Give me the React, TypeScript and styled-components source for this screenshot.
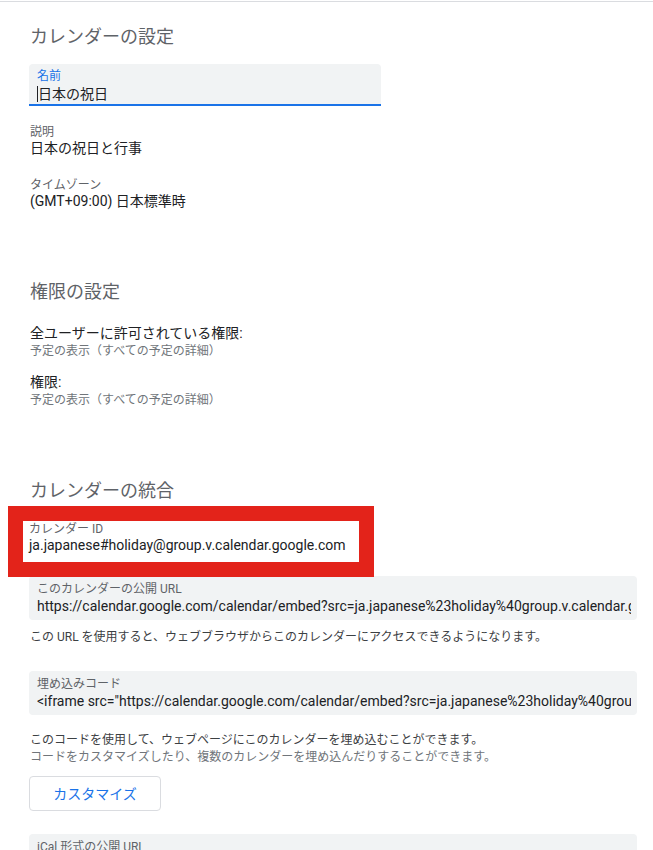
import React from "react";
import styled, { createGlobalStyle } from "styled-components";

const Global = createGlobalStyle`
  html, body { margin: 0; padding: 0; background: #fff; }
  body {
    font-family: Roboto, "Noto Sans CJK JP", "Noto Sans", sans-serif;
    color: #3c4043;
    -webkit-font-smoothing: antialiased;
  }
  * { box-sizing: border-box; }
`;

const TopRule = styled.div`
  height: 1px;
  margin-top: 1px;
  background: #dadce0;
`;

const Page = styled.main`
  padding: 0 16px 0 29px;
  overflow: hidden;
  height: 848px;
`;

const Section = styled.section<{ $gap: number }>`
  margin-top: ${(p) => p.$gap}px;
  display: flex;
  flex-direction: column;
`;

const Heading = styled.h2`
  margin: 0 0 0 1px;
  font-size: 18px;
  line-height: 24px;
  font-weight: 400;
  color: #5f6368;
`;

const EditField = styled.div`
  margin-top: 15px;
  width: 352px;
  height: 42px;
  padding: 4px 8px 0;
  background: #f1f3f4;
  border-radius: 4px 4px 0 0;
  border-bottom: 2px solid #1a73e8;
  display: flex;
  flex-direction: column;
`;

const EditLabel = styled.div`
  font-size: 12px;
  line-height: 16px;
  color: #1a73e8;
`;

const EditValue = styled.div`
  font-size: 14px;
  line-height: 20px;
  color: #202124;
  display: flex;
  align-items: center;
`;

const Caret = styled.span`
  width: 1px;
  height: 16px;
  background: #202124;
`;

const Info = styled.div<{ $gap: number }>`
  margin-top: ${(p) => p.$gap}px;
  padding-left: 1px;
  display: flex;
  flex-direction: column;
`;

const InfoLabel = styled.div`
  font-size: 12px;
  line-height: 14px;
  color: #5f6368;
`;

const InfoValue = styled.div`
  font-size: 14px;
  line-height: 18px;
  color: #202124;
`;

const PermTitle = styled.div`
  font-size: 14px;
  line-height: 20px;
  color: #202124;
`;

const PermSub = styled.div`
  font-size: 12px;
  line-height: 16px;
  color: #70757a;
`;

const IdField = styled.div`
  position: relative;
  margin-top: 17px;
  padding-top: 2px;
  display: flex;
  flex-direction: column;
`;

const IdLabel = styled.div`
  font-size: 12px;
  line-height: 14px;
  color: #5f6368;
`;

const IdValue = styled.div`
  font-size: 14px;
  line-height: 18px;
  color: #202124;
  white-space: nowrap;
`;

const Highlight = styled.div`
  position: absolute;
  left: -21px;
  top: -14px;
  width: 366px;
  height: 71px;
  border: 15px solid #e3231a;
  pointer-events: none;
`;

const CopyField = styled.div<{ $gap: number }>`
  margin-top: ${(p) => p.$gap}px;
  height: 44px;
  padding: 5px 6px 5px 8px;
  border-radius: 4px;
  background: #f1f3f4;
  display: flex;
  flex-direction: column;
  overflow: hidden;
`;

const CopyLabel = styled.div`
  font-size: 12px;
  line-height: 16px;
  color: #5f6368;
  white-space: nowrap;
`;

const CopyValue = styled.div`
  font-size: 14px;
  line-height: 18px;
  color: #202124;
  white-space: nowrap;
  overflow: hidden;
`;

const Help = styled.p<{ $muted?: boolean; $gap: number }>`
  margin: ${(p) => p.$gap}px 0 0 1px;
  font-size: 12px;
  line-height: 17px;
  color: ${(p) => (p.$muted ? "#70757a" : "#3c4043")};
`;

const Button = styled.button`
  margin-top: 10px;
  width: 132px;
  height: 35px;
  border: 1px solid #dadce0;
  border-radius: 4px;
  background: #fff;
  color: #1a73e8;
  font-family: inherit;
  font-size: 14px;
  line-height: 20px;
  padding: 0;
  cursor: pointer;
`;

export default function App() {
  return (
    <>
      <Global />
      <TopRule />
      <Page>
        <Section $gap={23}>
          <Heading>カレンダーの設定</Heading>
          <EditField>
            <EditLabel>名前</EditLabel>
            <EditValue>
              <Caret />
              日本の祝日
            </EditValue>
          </EditField>
          <Info $gap={19}>
            <InfoLabel>説明</InfoLabel>
            <InfoValue>日本の祝日と行事</InfoValue>
          </Info>
          <Info $gap={21}>
            <InfoLabel>タイムゾーン</InfoLabel>
            <InfoValue>(GMT+09:00) 日本標準時</InfoValue>
          </Info>
        </Section>

        <Section $gap={70}>
          <Heading>権限の設定</Heading>
          <Info $gap={19}>
            <PermTitle>全ユーザーに許可されている権限:</PermTitle>
            <PermSub>予定の表示（すべての予定の詳細）</PermSub>
          </Info>
          <Info $gap={13}>
            <PermTitle>権限:</PermTitle>
            <PermSub>予定の表示（すべての予定の詳細）</PermSub>
          </Info>
        </Section>

        <Section $gap={71}>
          <Heading>カレンダーの統合</Heading>
          <IdField>
            <IdLabel>カレンダー ID</IdLabel>
            <IdValue>ja.japanese#holiday@group.v.calendar.google.com</IdValue>
            <Highlight />
          </IdField>
          <CopyField $gap={22}>
            <CopyLabel>このカレンダーの公開 URL</CopyLabel>
            <CopyValue>
              https://calendar.google.com/calendar/embed?src=ja.japanese%23holiday%40group.v.calendar.google.com&amp;ctz=Asia%2FTokyo
            </CopyValue>
          </CopyField>
          <Help $gap={9}>
            この URL を使用すると、ウェブブラウザからこのカレンダーにアクセスできるようになります。
          </Help>
          <CopyField $gap={25}>
            <CopyLabel>埋め込みコード</CopyLabel>
            <CopyValue>
              {'<iframe src="https://calendar.google.com/calendar/embed?src=ja.japanese%23holiday%40group.v.calendar.google.com&ctz=Asia%2FTokyo" style="border: 0" width="800" height="600" frameborder="0" scrolling="no"></iframe>'}
            </CopyValue>
          </CopyField>
          <Help $gap={17}>
            このコードを使用して、ウェブページにこのカレンダーを埋め込むことができます。
          </Help>
          <Help $muted $gap={0}>
            コードをカスタマイズしたり、複数のカレンダーを埋め込んだりすることができます。
          </Help>
          <div>
            <Button>カスタマイズ</Button>
          </div>
          <CopyField $gap={23}>
            <CopyLabel>iCal 形式の公開 URL</CopyLabel>
            <CopyValue>
              https://calendar.google.com/calendar/ical/ja.japanese%23holiday%40group.v.calendar.google.com/public/basic.ics
            </CopyValue>
          </CopyField>
        </Section>
      </Page>
    </>
  );
}
